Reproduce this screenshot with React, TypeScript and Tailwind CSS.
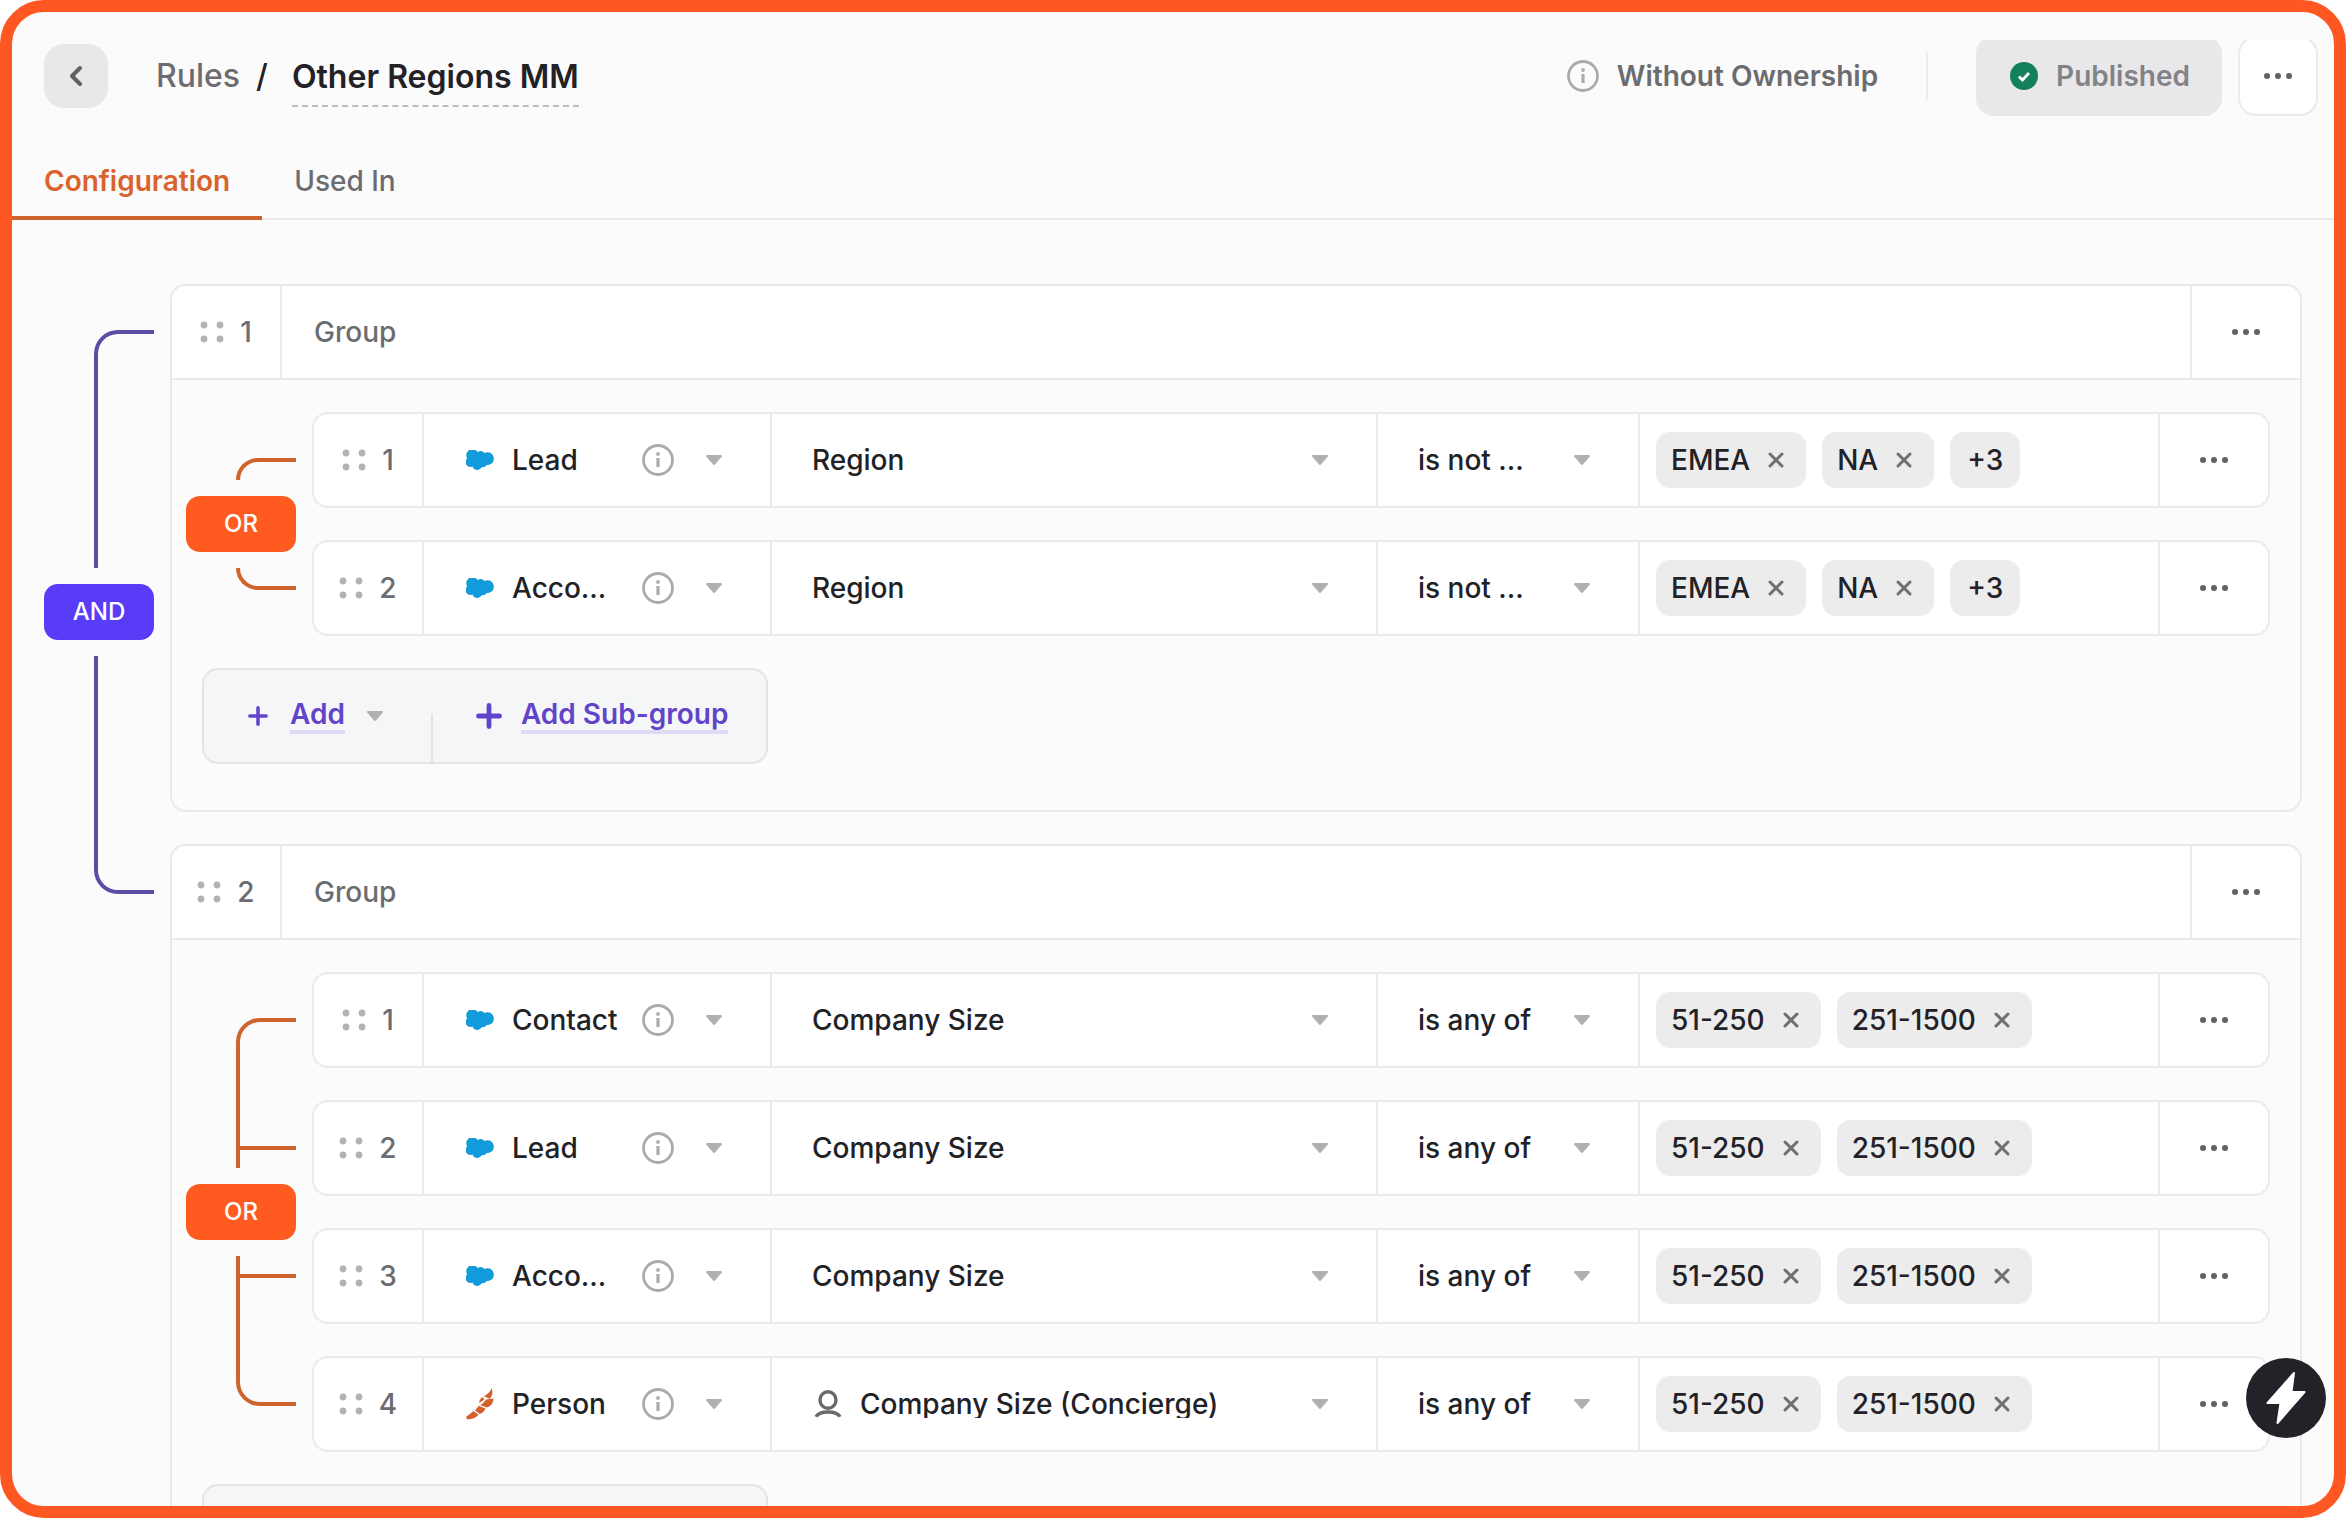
import { ReactNode } from "react";
import clsx from "clsx";
import { ChevronLeft, Plus, X } from "lucide-react";

type Source = "salesforce" | "concierge";

interface Rule {
  source: Source;
  object: string;
  field: string;
  concierge?: boolean;
  operator: string;
  values: string[];
  more?: string;
}

const groups: Rule[][] = [
  [
    { source: "salesforce", object: "Lead", field: "Region", operator: "is not ...", values: ["EMEA", "NA"], more: "+3" },
    { source: "salesforce", object: "Acco...", field: "Region", operator: "is not ...", values: ["EMEA", "NA"], more: "+3" },
  ],
  [
    { source: "salesforce", object: "Contact", field: "Company Size", operator: "is any of", values: ["51-250", "251-1500"] },
    { source: "salesforce", object: "Lead", field: "Company Size", operator: "is any of", values: ["51-250", "251-1500"] },
    { source: "salesforce", object: "Acco...", field: "Company Size", operator: "is any of", values: ["51-250", "251-1500"] },
    {
      source: "concierge",
      object: "Person",
      field: "Company Size (Concierge)",
      concierge: true,
      operator: "is any of",
      values: ["51-250", "251-1500"],
    },
  ],
];

function InfoIcon() {
  return (
    <svg viewBox="0 0 32 32" className="size-8 shrink-0 text-[#ababad]" fill="none" stroke="currentColor">
      <circle cx="16" cy="16" r="14.5" strokeWidth="2.8" />
      <path d="M16 14v9" strokeWidth="3.2" />
      <circle cx="16" cy="10" r="1.9" fill="currentColor" stroke="none" />
    </svg>
  );
}

function Caret() {
  return (
    <svg viewBox="0 0 16 10" className="h-[10px] w-4 shrink-0" fill="#b0b0b1">
      <path d="M1 0h14a1 1 0 0 1 .8 1.6l-6.6 7.6a1.6 1.6 0 0 1-2.4 0L.2 1.6A1 1 0 0 1 1 0z" />
    </svg>
  );
}

function Dots() {
  return (
    <svg viewBox="0 0 28 6" className="h-[6px] w-7" fill="#616165">
      <circle cx="3" cy="3" r="3" />
      <circle cx="14" cy="3" r="3" />
      <circle cx="25" cy="3" r="3" />
    </svg>
  );
}

function DragHandle({ index }: { index: number }) {
  return (
    <button className="flex w-[110px] shrink-0 items-center justify-center gap-4 border-r-2 border-[#ebebec] font-medium text-[#6c6c70]">
      <svg viewBox="0 0 24 22" className="h-[22px] w-6" fill="#b3b3b4">
        <circle cx="4" cy="4" r="3.4" />
        <circle cx="20" cy="4" r="3.4" />
        <circle cx="4" cy="18" r="3.4" />
        <circle cx="20" cy="18" r="3.4" />
      </svg>
      {index}
    </button>
  );
}

function MoreCell() {
  return (
    <button aria-label="More" className="flex w-[108px] shrink-0 items-center justify-center">
      <Dots />
    </button>
  );
}

function SourceIcon({ source }: { source: Source }) {
  if (source === "concierge") {
    return (
      <svg viewBox="0 0 28 32" className="h-8 w-7 shrink-0" fill="#d4602c">
        <path d="M25.500 0c-.8 3.400-3.600 6-7.600 8.200l5.700 2.600c3-2.600 3.600-6.600 1.900-10.800z" />
        <path d="M16.600 9c-2.200 1.600-3.400 3.800-3.400 6l5.200-3.600z" />
        <path d="M20 11.600c-1.400 2.400-3.600 4.200-5.800 5.400l6.600 2.600c4-1.600 6.800-4.800 6.600-9.200z" />
        <path d="M12.600 17.800c-.8 1.600-2 3.200-3.800 4.400l5 3.800c3-1 4.800-3 5.600-5.400z" />
        <path d="M7.400 23C5.200 25.200 2.800 27.200 0 28.800L1.200 31.400c4.800 0 8.800-1.600 11.400-4.600z" />
      </svg>
    );
  }
  return (
    <svg viewBox="0 0 28 20" className="h-5 w-7 shrink-0" fill="#119bdb">
      <path d="M11.500 1.900A5.400 5.400 0 0 1 18.500 3a6.400 6.400 0 0 1 9.300 6 6 6 0 0 1-7.100 5.900 4.600 4.600 0 0 1-5 2.300 5 5 0 0 1-9.200-.7A4.900 4.900 0 0 1 1.200 8.400 5.600 5.600 0 0 1 11.500 1.900z" />
    </svg>
  );
}

function PersonIcon() {
  return (
    <svg viewBox="0 0 30 28" className="h-7 w-[30px] shrink-0" fill="none" stroke="#6a6a6e" strokeWidth="3.4">
      <ellipse cx="16" cy="10" rx="8" ry="8.300" />
      <path d="M4 26.800c2-3.800 7-4.800 12-4.800s10 1 12 4.800" />
    </svg>
  );
}

// Bracket that joins sibling conditions, with the operator in the middle
function Connector({ label, line, badge, tick, className }: { label: string; line: string; badge: string; tick?: boolean; className?: string }) {
  return (
    <div className={clsx("flex w-[110px] shrink-0 flex-col gap-4", className)}>
      <div className={clsx("ml-[50px] flex flex-1 flex-col justify-end rounded-tl-[24px] border-t-4 border-l-4 pb-[18px]", line)}>
        {tick && <div className={clsx("border-t-4", line)} />}
      </div>
      <button className={clsx("h-14 rounded-[14px] text-2xl font-medium text-white", badge)}>{label}</button>
      <div className={clsx("ml-[50px] flex flex-1 flex-col rounded-bl-[24px] border-b-4 border-l-4 pt-[18px]", line)}>
        {tick && <div className={clsx("border-t-4", line)} />}
      </div>
    </div>
  );
}

function Chip({ children, removable }: { children: ReactNode; removable?: boolean }) {
  return (
    <span className={clsx("flex h-14 items-center gap-[14px] rounded-[14px] bg-[#ececed]", removable ? "pr-[18px] pl-[15px]" : "px-[17px]")}>
      {children}
      {removable && (
        <button aria-label="Remove">
          <X className="size-6 text-[#6f6f73]" strokeWidth={3} />
        </button>
      )}
    </span>
  );
}

function RuleRow({ rule, index }: { rule: Rule; index: number }) {
  return (
    <div className="flex h-24 rounded-2xl border-2 border-[#ebebec] bg-white font-medium text-[#212126]">
      <DragHandle index={index} />
      <button className="flex w-[348px] shrink-0 items-center border-r-2 border-[#ebebec] pr-12 pl-[42px] text-left">
        <SourceIcon source={rule.source} />
        <span className="ml-[18px] flex-1 truncate">{rule.object}</span>
        <InfoIcon />
        <span className="ml-8 flex">
          <Caret />
        </span>
      </button>
      <button className="flex min-w-0 flex-1 items-center gap-[18px] border-r-2 border-[#ebebec] pr-12 pl-10 text-left">
        {rule.concierge && <PersonIcon />}
        <span className={clsx("flex-1 truncate", rule.concierge && "leading-7")}>{rule.field}</span>
        <Caret />
      </button>
      <button className="flex w-[262px] shrink-0 items-center justify-between border-r-2 border-[#ebebec] pr-12 pl-10">
        {rule.operator}
        <Caret />
      </button>
      <div className="flex w-[520px] shrink-0 items-center gap-4 border-r-2 border-[#ebebec] pl-4">
        {rule.values.map((value) => (
          <Chip key={value} removable>
            {value}
          </Chip>
        ))}
        {rule.more && <Chip>{rule.more}</Chip>}
      </div>
      <MoreCell />
    </div>
  );
}

function AddBar() {
  return (
    <div className="ml-[30px] flex h-24 w-fit rounded-2xl border-2 border-[#e3e4e6] bg-[#f5f6f8] font-semibold text-[#6244cb]">
      <button className="flex items-center pr-12 pl-10">
        <Plus className="size-7" strokeWidth={3} />
        <span className="ml-[18px] border-b-4 border-[#e2daf5] leading-8">Add</span>
        <span className="ml-[22px] flex">
          <Caret />
        </span>
      </button>
      <span className="h-12 w-[2px] self-end bg-[#e3e4e6]" />
      <button className="flex items-center pr-[38px] pl-[38px]">
        <Plus className="size-9" strokeWidth={3.2} />
        <span className="ml-[14px] border-b-4 border-[#e2daf5] leading-8">Add Sub-group</span>
      </button>
    </div>
  );
}

function GroupCard({ rules, index }: { rules: Rule[]; index: number }) {
  return (
    <section className="min-w-0 flex-1 rounded-2xl border-2 border-[#e9e9eb]">
      <header className="flex h-[94px] rounded-t-[14px] border-b-2 border-[#e9e9eb] bg-white">
        <DragHandle index={index} />
        <h2 className="flex flex-1 items-center pl-8 font-medium text-[#6c6c70]">Group</h2>
        <div className="flex border-l-2 border-[#ebebec]">
          <MoreCell />
        </div>
      </header>
      <div className="flex flex-col gap-8 pt-8 pb-[46px]">
        <div className="flex gap-4 pr-[30px] pl-[14px]">
          <Connector label="OR" line="border-[#d0642f]" badge="bg-[#ff5a1f]" tick={rules.length > 2} className="py-[46px]" />
          <div className="flex min-w-0 flex-1 flex-col gap-8">
            {rules.map((rule, i) => (
              <RuleRow key={i} rule={rule} index={i + 1} />
            ))}
          </div>
        </div>
        <AddBar />
      </div>
    </section>
  );
}

export default function App() {
  return (
    <div className="relative flex h-screen flex-col overflow-hidden rounded-[44px] border-[12px] border-[#ff5722] bg-[#fbfbfb] font-[Inter,sans-serif] text-[28px]">
      <div className="flex h-[104px] shrink-0 items-end pr-4 pl-8">
        <div className="flex h-20 flex-1 items-center">
          <button aria-label="Back" className="flex size-16 items-center justify-center rounded-[20px] bg-[#e8e8e9]">
            <ChevronLeft className="size-8 text-[#616165]" strokeWidth={3} />
          </button>
          <nav className="ml-12 flex items-center text-[32px] font-medium">
            <a href="#" className="text-[#6c6c70]">
              Rules
            </a>
            <span className="ml-4 text-[#212126]">/</span>
            <h1 className="ml-6 border-b-2 border-dashed border-[#bcbcbe] pt-2 pb-1 font-semibold text-[#212126]">Other Regions MM</h1>
          </nav>
        </div>
        <div className="flex h-20 items-center">
          <InfoIcon />
          <span className="ml-[18px] font-semibold text-[#6c6c70]">Without Ownership</span>
          <span className="ml-12 h-12 w-[2px] bg-[#ebebec]" />
          {/* buttons are cut by the edge of the toolbar */}
          <div className="ml-12 flex h-[76px] items-end gap-4 self-end overflow-hidden">
            <button className="flex h-20 shrink-0 items-center gap-[18px] rounded-[18px] bg-[#e8e8ea] pr-8 pl-[34px] font-semibold text-[#838387]">
              <svg viewBox="0 0 28 28" className="size-7" fill="none">
                <circle cx="14" cy="14" r="14" fill="#14805e" />
                <path d="M9 14.500l3.500 3.500L19 11" stroke="#fff" strokeWidth="2.8" />
              </svg>
              Published
            </button>
            <button aria-label="More" className="flex h-20 w-20 shrink-0 items-center justify-center rounded-[18px] border-2 border-[#ebebec] bg-white">
              <Dots />
            </button>
          </div>
        </div>
      </div>
      <div role="tablist" className="flex h-[104px] shrink-0 items-end border-b-2 border-[#e9e9eb] font-medium">
        <button role="tab" aria-selected="true" className="-mb-[2px] h-[74px] border-b-4 border-[#d0642f] px-8 font-semibold text-[#d9632b]">
          Configuration
        </button>
        <button role="tab" aria-selected="false" className="h-[72px] px-8 pb-[2px] text-[#6c6c70]">
          Used In
        </button>
      </div>
      <main className="flex flex-col gap-8 px-8 pt-16">
        {groups.map((rules, i) => (
          <div key={i} className="flex gap-4">
            {i < groups.length - 1 ? (
              <Connector label="AND" line="border-[#5d4ba6]" badge="bg-[#583cf8]" className="mt-[46px] -mb-[82px]" />
            ) : (
              <div className="w-[110px] shrink-0" />
            )}
            <GroupCard rules={rules} index={i + 1} />
          </div>
        ))}
      </main>
      <button aria-label="Quick actions" className="absolute right-2 bottom-[68px] flex size-20 items-center justify-center rounded-full bg-[#222228]">
        <svg viewBox="0 0 40 54" className="h-[54px] w-10" fill="#fff" stroke="#fff" strokeWidth="2" strokeLinejoin="round">
          <path d="M28 2L1.500 32h13L11.500 52l27-31H25.500z" />
        </svg>
      </button>
    </div>
  );
}
